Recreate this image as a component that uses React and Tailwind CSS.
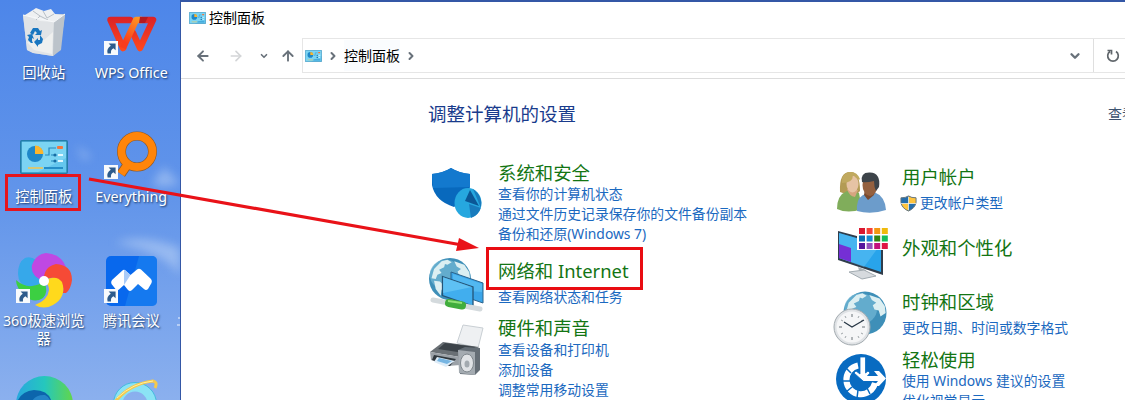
import { ArrowLeft, ArrowRight, ArrowUp, ChevronDown, ChevronRight } from "lucide-react";

function ShortcutBadge() {
  return (
    <svg viewBox="0 0 14 14" className="absolute left-4 top-[41px] h-[14px] w-[14px]">
      <rect width="14" height="14" fill="#f8fafc" />
      <path d="M4.6 2.4H11.6V9.2L9.4 7.2C7.4 8.4 6.6 9.8 7 12.4H3.6C2.6 9 4 6.4 6.8 4.8Z" fill="#2d5b8c" />
    </svg>
  );
}

function RecycleBin() {
  return (
    <svg viewBox="0 0 56 56" className="h-14 w-14">
      <path d="M7 9L49 8L44 43L37 50L17 47L11 44Z" fill="#c9d0d7" />
      <path d="M7 9L38 15L37 50L17 47L11 44Z" fill="#e0e3e6" />
      <path d="M38 15L49 8L45 44L37 50Z" fill="#bcc3ca" />
      <path d="M9 9L17 4L20 2L28 5L35 3L39 8L47 9L38 16L24 15Z" fill="#eef0f2" />
      <path d="M17 5L24 10L20 14M27 5L31 12L38 8M24 10L32 14" stroke="#b8bfc6" fill="none" />
      <path d="M11 36L18 44L36 48L37 26L28 34Z" fill="#f2f2f1" opacity=".8" />
      <path d="M7 9L38 16L49 8" stroke="#f6f8fa" fill="none" />
      <g fill="#1976c0">
        <path d="M14 27L17 22L22 22L24 25L26 24L25 29L19 29L21 27L19 25L17 29Z" />
        <path d="M11 29L16 28L18 33L16 32L16 35L17 37H15L12 34L13 31Z" />
        <path d="M18 36L22 32V34L24 34L24 29L27 33L26 37L22 39V41Z" />
      </g>
    </svg>
  );
}

function WpsLogo() {
  return (
    <svg viewBox="0 0 56 56" className="h-14 w-14" fill="none" strokeWidth="6.5" strokeLinejoin="round">
      <defs>
        <linearGradient id="wps" gradientUnits="userSpaceOnUse" x1="0" y1="10" x2="0" y2="46">
          <stop offset="0" stopColor="#da2128" />
          <stop offset="1" stopColor="#ff4a1c" />
        </linearGradient>
        <linearGradient id="wpsFold" gradientUnits="userSpaceOnUse" x1="22" y1="36" x2="38" y2="10">
          <stop offset="0" stopColor="#f83c1c" />
          <stop offset="1" stopColor="#ffa024" />
        </linearGradient>
      </defs>
      <path d="M27 14H7.500L20 42" stroke="url(#wps)" strokeLinecap="round" />
      <path d="M30 27L37 42L50 14H37" stroke="url(#wps)" strokeLinecap="round" />
      <path d="M20 42L33 14H39" stroke="url(#wpsFold)" />
      <path d="M37 11H45L42 17H36Z" fill="#b5191f" />
    </svg>
  );
}

function ControlPanelIcon({ className }) {
  return (
    <svg viewBox="0 0 48 34" className={className}>
      <rect x=".8" y=".8" width="46.4" height="32.4" rx="1" fill="#64c6ee" stroke="#237da9" strokeWidth="1.6" />
      <path d="M2 2H46V18L18 32H2Z" fill="#8bddf6" opacity=".6" />
      <circle cx="15" cy="14" r="8" fill="#1e87c8" />
      <path d="M15 14V5.500A8.500 8.500 0 0 1 23.500 14Z" fill="#fbb52c" />
      <path d="M25 15H29V8H36M31 15H36M31 21H35" stroke="#2688be" fill="none" strokeWidth="1.200" />
      <circle cx="35" cy="15" r="1.600" fill="#176da5" />
      <circle cx="35" cy="21" r="1.600" fill="#176da5" />
      <rect x="37" y="6" width="6" height="3" rx="1" fill="#f3763c" />
      <rect x="38" y="14" width="5" height="2" fill="#e1f8ff" />
      <rect x="38" y="20" width="5" height="2" fill="#e1f8ff" />
      <rect x="8" y="27" width="15" height="2" fill="#d6c876" />
      <rect x="24" y="27" width="19" height="2" fill="#258dc7" />
    </svg>
  );
}

function EverythingIcon() {
  return (
    <svg viewBox="0 0 56 56" className="h-14 w-14">
      <path d="M27 31L18 44" stroke="#8d5828" strokeWidth="9.500" />
      <circle cx="34" cy="21.500" r="15.500" fill="none" stroke="#8d5828" strokeWidth="9" />
      <path d="M27 31L18 44" stroke="#ff850a" strokeWidth="8" />
      <circle cx="34" cy="21.500" r="15.500" fill="none" stroke="#ff850a" strokeWidth="7.800" />
    </svg>
  );
}

function Browser360() {
  return (
    <svg viewBox="0 0 56 56" className="h-14 w-14 overflow-visible">
      <path d="M28 27L14 35Q2 31 2 20Q2 8 9 4Q15 2 20 6Q13 16 28 27Z" fill="#36a8ea" />
      <path d="M28 27Q14 22 16 11Q20 0 30-1Q45 0 50 13Q40 9 34 14Q29 19 28 27Z" fill="#bf48e3" />
      <path d="M28 27Q27 13 40 10Q56 11 56 26Q55 35 50 39H47Q49 28 38 24Q33 23 28 27Z" fill="#f64a36" />
      <path d="M28 27Q40 20 46 28Q51 43 37 51Q28 56 19 51Q32 46 33 36Q33 30 28 27Z" fill="#ffd91c" />
      <path d="M28 27Q33 38 27 44Q18 50 9 42Q0 34 0 26Q8 33 16 32Q24 31 28 27Z" fill="#3ccf42" />
      <circle cx="28" cy="27" r="5" fill="#fff" />
    </svg>
  );
}

function MeetingIcon() {
  return (
    <svg viewBox="0 0 56 56" className="h-14 w-14">
      <rect x="3" y="2" width="51" height="50" rx="5" fill="#0868ed" />
      <path d="M36 2H49Q54 2 54 7V47Q54 52 49 52H22Z" fill="#218af2" opacity=".5" />
      <path d="M9 26L20 16Q21.500 15 23 17L27.500 21L34 15.500Q36 14 38 15.500L48 25Q49.500 27 48.500 29L45 35Q43 37 41 35L35 30L29 36Q27 38 25 36L21 31L16 35.500Q14 37 12.500 35L8.500 30Q7.500 28 9 26Z" fill="#fff" />
      <path d="M21 16L23 17L27.500 21L21 31Z" fill="#a9cbf9" />
    </svg>
  );
}

function EdgeIcon() {
  return (
    <svg viewBox="0 0 56 56" className="h-14 w-14 overflow-visible">
      <defs>
        <linearGradient id="edge">
          <stop stopColor="#28a7df" />
          <stop offset=".5" stopColor="#25c7bd" />
          <stop offset="1" stopColor="#62d64a" />
        </linearGradient>
      </defs>
      <circle cx="28.500" cy="26.500" r="28.500" fill="url(#edge)" />
      <path d="M0 27Q4 13 18 12Q34 12 36 26L31 54Q0 54 0 27Z" fill="#0c65ac" />
      <path d="M12 34Q15 16 29 17Q37 21 34 32V54Q14 53 12 34Z" fill="#2484c8" />
    </svg>
  );
}

function ExplorerIcon() {
  return (
    <svg viewBox="0 0 56 56" className="h-14 w-14">
      <circle cx="32" cy="26" r="17" fill="none" stroke="#8be3f5" strokeWidth="9" />
      <circle cx="32" cy="26" r="21.500" fill="none" stroke="#45b9df" />
      <path d="M12 24Q26 6 50 3Q55 4 52 10" fill="none" stroke="#f6c94b" strokeWidth="3" />
      <path d="M14 20Q30 5 50 3" fill="none" stroke="#fff0a0" />
    </svg>
  );
}

function DesktopItem({ label, icon, shortcut }) {
  return (
    <div className="relative flex h-[124px] flex-col items-center pt-1.5">
      {icon}
      {shortcut && <ShortcutBadge />}
      <div className="mt-[2px] w-[86px] break-all text-center text-[14.3px] leading-[18px] text-white [text-shadow:1px_1px_2px_#15345f]">
        {label}
      </div>
    </div>
  );
}

function Desktop() {
  return (
    <div className="relative h-[400px] w-[180px] shrink-0 overflow-hidden bg-linear-to-b from-[#4d86e9] via-[#6295ea] to-[#8bb0ee]">
      <svg viewBox="0 0 180 400" className="absolute inset-0 blur-[5px]">
        <path d="M76 145L91 157L84 160ZM152 184L164 167L180 184L162 187ZM115 243Q142 233 180 248V275Q164 252 115 243Z" fill="#dce9fb" opacity=".38" />
      </svg>
      <div className="relative grid w-[175px] grid-cols-2">
        <DesktopItem label="回收站" icon={<RecycleBin />} />
        <DesktopItem label="WPS Office" icon={<WpsLogo />} shortcut />
        <DesktopItem label="控制面板" icon={<div className="h-14 pt-[10px]"><ControlPanelIcon className="h-[34px] w-12" /></div>} />
        <DesktopItem label="Everything" icon={<EverythingIcon />} shortcut />
        <DesktopItem label="360极速浏览器" icon={<Browser360 />} shortcut />
        <DesktopItem label="腾讯会议" icon={<MeetingIcon />} shortcut />
        <DesktopItem label="" icon={<EdgeIcon />} />
        <DesktopItem label="" icon={<ExplorerIcon />} />
      </div>
      {/* edge of the next icon's label, behind the window */}
      <svg viewBox="0 0 3 12" className="absolute left-[177px] top-[315px] h-3 w-[3px]">
        <path d="M1 3H3M0 10H3" stroke="#f2f6fd" strokeWidth="1.200" />
      </svg>
    </div>
  );
}

function SecurityIcon() {
  return (
    <svg viewBox="0 0 56 56" className="h-14 w-14">
      <path d="M4 9Q15 8 23 3Q31 8 42 9V22Q40 35 26 42Q7 36 4 20Z" fill="#0869bd" />
      <path d="M23 3Q31 8 42 9V22L5 23L4 9Q15 8 23 3Z" fill="#1379ce" />
      <ellipse cx="40" cy="38" rx="13.500" ry="15" fill="#26a7df" />
      <path d="M45 24Q55 31 53 42Q51 50 43 53L41 39L53 43Z" fill="#187bbd" />
      <path d="M42 25L51 41L37 36Z" fill="#0b5796" />
    </svg>
  );
}

function Globe({ cx, cy, r }) {
  return (
    <g transform={`translate(${cx} ${cy}) scale(${r / 25}) translate(-26 -26)`}>
      <circle cx="26" cy="26" r="25" fill="#3e8fb8" />
      <ellipse cx="21" cy="21" rx="19" ry="18" fill="#74b8d6" opacity=".7" />
      <g fill="#dceff2">
        <path d="M7 14L16 5L23 3L28 6L23 9L20 8L19 12L13 15L16 19L11 21L9 26L4 25Z" />
        <path d="M31 5L43 9L49 18L50 26L44 30L42 23L37 22L35 17L39 14L34 11Z" />
        <path d="M7 28L14 29L19 34L16 39L15 46L9 38Z" />
      </g>
    </g>
  );
}

function NetworkIcon() {
  return (
    <svg viewBox="0 0 56 56" className="h-14 w-14">
      <Globe cx={22} cy={22} r={21} />
      <path d="M23 15L55 26V46L23 35Z" fill="#3aa5e9" stroke="#2b648d" />
      <path d="M25 17L54 27V35L25 33Z" fill="#62c4f6" opacity=".6" />
      <path d="M14.500 19.500L45 30V49L14.500 38.500Z" fill="#41aeee" stroke="#245477" strokeWidth="1.300" />
      <path d="M15 20L44 30L15 36Z" fill="#72cdf8" opacity=".6" />
      <path d="M5 43L52 52" stroke="#d4dadd" strokeWidth="5" strokeLinecap="round" />
      <path d="M21 46L34 48.500" stroke="#41ad3d" strokeWidth="8" strokeLinecap="round" />
      <path d="M20 44L34 46" stroke="#92e278" strokeWidth="2" />
    </svg>
  );
}

function PrinterIcon() {
  return (
    <svg viewBox="0 0 56 56" className="h-14 w-14">
      <path d="M35 4L55 7L50 27L29 22Z" fill="#eef0f2" stroke="#c9cfd4" />
      <path d="M2 31L15 21L51 26L32 36Z" fill="#6a7075" />
      <path d="M17 22L48 26L36 32L10 28Z" fill="#3c4349" />
      <path d="M2 31L32 36V44L20 45L3 39Z" fill="#9ba1a7" />
      <path d="M6 34L28 38L22 45L4 39Z" fill="#30383e" />
      <path d="M9 36L27 40L18 46L6 41Z" fill="#ddecf8" />
      <path d="M11 37L24 40L19 43L9 40Z" fill="#76b5e2" />
      <path d="M30 29L37 26L52 27V49L47 54L32 53Z" fill="#656e76" />
      <path d="M30 29L47 31V54L31 52Z" fill="#a4abb1" />
      <ellipse cx="39" cy="42" rx="6.500" ry="9" fill="#e0e3e6" stroke="#7f878d" />
      <ellipse cx="39" cy="43" rx="2.500" ry="3.500" fill="#a3aab0" />
    </svg>
  );
}

function UsersIcon() {
  return (
    <svg viewBox="0 0 56 56" className="h-14 w-14">
      <path d="M8 29Q7 9 18 9Q28 8 28 28L22 34Z" fill="#b39b54" />
      <path d="M5 46Q5 32 15 28L27 30L30 46Q16 51 5 46Z" fill="#80ad5b" />
      <path d="M15 26L26 27L23 34Q17 33 15 26Z" fill="#d7a580" />
      <ellipse cx="20.500" cy="21" rx="6" ry="8.500" fill="#e6c3a4" />
      <path d="M10 20Q21 20 21 12Q27 18 28 16Q25 8 17 9Q9 11 10 20Z" fill="#c0a95f" />
      <path d="M25 48Q24 36 31 32L42 29Q53 33 54 47Q39 52 25 48Z" fill="#6c9ccb" />
      <path d="M33 27H43L42 32L36 37L32 32Z" fill="#79492f" />
      <ellipse cx="38" cy="22" rx="7.500" ry="11" fill="#94603f" />
      <path d="M30 19Q28 9 38 9.500Q49 10 47 24L44 28Q42 24 42 18Q34 20 30 19Z" fill="#3d444a" />
    </svg>
  );
}

function AppearanceIcon() {
  const swatches = ["#da1830", "#f54138", "#f39812", "#efba0b", "#086fb4", "#148bd0", "#338411", "#15bd59", "#55169c", "#9454bb", "#c4117c", "#df1644"];
  return (
    <svg viewBox="0 0 56 56" className="h-14 w-14">
      <path d="M6 5L51 17V49L6 34Z" fill="#303d4b" />
      <path d="M7 7L49 19V46L7 32Z" fill="#28a4eb" />
      <path d="M7 7L48 19L32 41L7 32Z" fill="#64c3f6" opacity="0.500" />
      <path d="M7 18L19 22V36L7 32Z" fill="#752fd5" />
      <path d="M26 41L34 44V49L28 48Z" fill="#a8b1b6" />
      <path d="M17 46L32 44L44 50L30 53Z" fill="#d6dade" stroke="#a2abb1" />
      <rect x="25" y="1" width="31" height="23" fill="#fff" />
      {swatches.map((color, i) => (
        <rect key={i} x={27 + (i % 4) * 7.6} y={2 + Math.floor(i / 4) * 7.5} width="6" height="6" fill={color} />
      ))}
    </svg>
  );
}

function ClockIcon() {
  return (
    <svg viewBox="0 0 56 56" className="h-14 w-14">
      <Globe cx={33} cy={23} r={21.5} />
      <circle cx="20" cy="37" r="18" fill="#dfe2e5" stroke="#a3abb0" />
      <circle cx="20" cy="37" r="15.500" fill="#f5f6f7" />
      <path d="M20 24V27M20 47V50M7 37H10M30 37H33" stroke="#6b7379" />
      <path d="M27 26L26 28M31 30L29 31M31 44L29 43M27 48L26 46M13 48L14 46M9 44L11 43M9 30L11 31M13 26L14 28" stroke="#a0a6aa" />
      <path d="M12 32L20 37L32 30" fill="none" stroke="#263644" strokeWidth="1.200" />
    </svg>
  );
}

function EaseIcon() {
  return (
    <svg viewBox="0 0 56 56" className="h-14 w-14">
      <circle cx="29" cy="27" r="25" fill="#086bc1" />
      <path d="M26 13.500A14.500 14.500 0 1 0 43 31" fill="none" stroke="#fff" strokeWidth="6" />
      <path d="M14 16L19 21M10 29H18M14 40L20 35M25 46L26 38M38 42L35 36" stroke="#086bc1" strokeWidth="1.500" />
      <path d="M28 5H33.500V21L36 19L38 21L31 29L22 21L24 19L28 22Z" fill="#fff" stroke="#086bc1" strokeWidth=".8" />
      <path d="M32 24H46L42 19H47L54 26.500L47 34H42L46 29H31Z" fill="#fff" />
    </svg>
  );
}

function UacShield() {
  return (
    <svg viewBox="0 0 18 18" className="mr-[3px] h-[17px] w-[17px] shrink-0">
      <path d="M1 3Q6 3 9 1Q12 3 17 3V8Q16 14 9 17Q2 14 1 8Z" fill="#256eac" />
      <path d="M9 1Q12 3 17 3V9H9ZM1.200 9H9V17Q3 15 1.200 9Z" fill="#ffc43d" />
      <path d="M1 3Q6 3 9 1Q12 3 17 3V8Q16 14 9 17Q2 14 1 8Z" fill="none" stroke="#66747c" />
      <path d="M9 2V16M1 9H17" stroke="#fff" strokeWidth=".7" />
    </svg>
  );
}

function Category({ title, links = [], icon, className, iconClass, linksClass, shield }) {
  return (
    <div className={`flex gap-[14px] whitespace-nowrap ${className}`}>
      <div className={`h-14 w-14 shrink-0 ${iconClass}`}>{icon}</div>
      <div>
        <h2 className="text-[18.4px] leading-6 text-[#137513]">{title}</h2>
        <ul className={linksClass}>
          {links.map((link) => (
            <li key={link} className="flex items-center text-[13.85px] leading-[20.200px] text-[#1b69c0]">
              {shield && <UacShield />}
              {link}
            </li>
          ))}
        </ul>
      </div>
    </div>
  );
}

function AddressBar() {
  return (
    <div className="flex h-[43px] items-center border-b border-[#dcdcdc] pb-[3px] text-[#68717a]">
      <ArrowLeft className="ml-[14px] h-4 w-4" strokeWidth={2.8} />
      <ArrowRight className="ml-[17px] h-4 w-4 text-[#d3d5d7]" strokeWidth={2.5} />
      <ChevronDown className="ml-[15px] h-2.5 w-2.5" strokeWidth={4} />
      <ArrowUp className="ml-[11px] h-4 w-4" strokeWidth={2.8} />
      <div className="ml-[6px] flex h-[35px] flex-1 items-center border border-r-0 border-[#e6e6e6]">
        <ControlPanelIcon className="ml-0.5 h-3 w-[17px]" />
        <ChevronRight className="ml-[5px] h-3 w-3" strokeWidth={4} />
        <div className="ml-[5px] flex h-[31px] items-center bg-[#fafcfe] text-[14px] text-black">控制面板</div>
        <ChevronRight className="ml-[5px] h-3 w-3" strokeWidth={4} />
        <ChevronDown className="ml-auto mr-[11px] h-[14px] w-[14px]" strokeWidth={4} />
        <div className="flex h-full w-[32px] items-center border-l border-[#dfdfdf] pl-[12px]">
          <svg viewBox="0 0 14 14" className="h-[14px] w-[14px]" fill="none" stroke="#60666b" strokeWidth="1.700">
            <path d="M10 2.500A5.300 5.300 0 1 1 4 2.500M1.500 1.500H5.500V5.500" />
          </svg>
        </div>
      </div>
    </div>
  );
}

function ControlPanelWindow() {
  return (
    <div className="h-[400px] min-w-0 flex-1 overflow-hidden border-l border-t-2 border-[#3457a6] bg-white">
      <div className="flex h-[34px] items-center gap-[3px] pb-[3px] pl-2 text-[14px] text-black">
        <ControlPanelIcon className="h-3 w-[17px]" />
        控制面板
      </div>
      <AddressBar />
      <div className="flex h-[82px] items-start justify-between whitespace-nowrap pl-[247px] pt-[23px]">
        <h1 className="text-[18.5px] leading-6 text-[#193b8c]">调整计算机的设置</h1>
        <div className="w-[17px] overflow-hidden text-[14px] leading-6 text-[#3c526f]">查看方式</div>
      </div>
      <div className="flex pl-[247px]">
        <div className="w-[404px] shrink-0">
          <Category
            title="系统和安全"
            links={["查看你的计算机状态", "通过文件历史记录保存你的文件备份副本", "备份和还原(Windows 7)"]}
            icon={<SecurityIcon />}
            className="h-[98px]"
            iconClass="mt-1"
            linksClass="-mt-px"
          />
          <Category
            title="网络和 Internet"
            links={["查看网络状态和任务"]}
            icon={<NetworkIcon />}
            className="h-[57px]"
            iconClass="-mt-0.5"
            linksClass="mt-1"
          />
          <Category
            title="硬件和声音"
            links={["查看设备和打印机", "添加设备", "调整常用移动设置"]}
            icon={<PrinterIcon />}
            iconClass="mt-[5px]"
          />
        </div>
        <div className="pt-1">
          <Category title="用户帐户" links={["更改帐户类型"]} icon={<UsersIcon />} className="h-[71px]" iconClass="-mt-0.5" linksClass="mt-1 -ml-[2px]" shield />
          <Category title="外观和个性化" icon={<AppearanceIcon />} className="h-[54px]" iconClass="-mt-[10px]" />
          <Category title="时钟和区域" links={["更改日期、时间或数字格式"]} icon={<ClockIcon />} className="h-[58px]" linksClass="mt-1" />
          <Category title="轻松使用" links={["使用 Windows 建议的设置", "优化视觉显示"]} icon={<EaseIcon />} iconClass="mt-1" linksClass="-mt-px" />
        </div>
      </div>
    </div>
  );
}

function Annotations() {
  return (
    <div className="pointer-events-none absolute inset-0">
      <div className="absolute left-[5px] top-[174px] h-[37px] w-[76px] border-[3px] border-[#e6141d]" />
      <div className="absolute left-[486px] top-[247px] h-[43px] w-[157px] border-[3px] border-[#e90c12]" />
      <svg viewBox="0 0 1125 400" className="absolute inset-0">
        <path d="M89 179L462 245" stroke="#e91218" strokeWidth="3.200" />
        <path d="M459 238L479 248L456 251Z" fill="#e91218" />
      </svg>
    </div>
  );
}

export default function App() {
  return (
    <div className="relative flex h-[400px] w-[1125px] overflow-hidden font-['Noto_Sans','Noto_Sans_CJK_SC',sans-serif]">
      <Desktop />
      <ControlPanelWindow />
      <Annotations />
    </div>
  );
}
